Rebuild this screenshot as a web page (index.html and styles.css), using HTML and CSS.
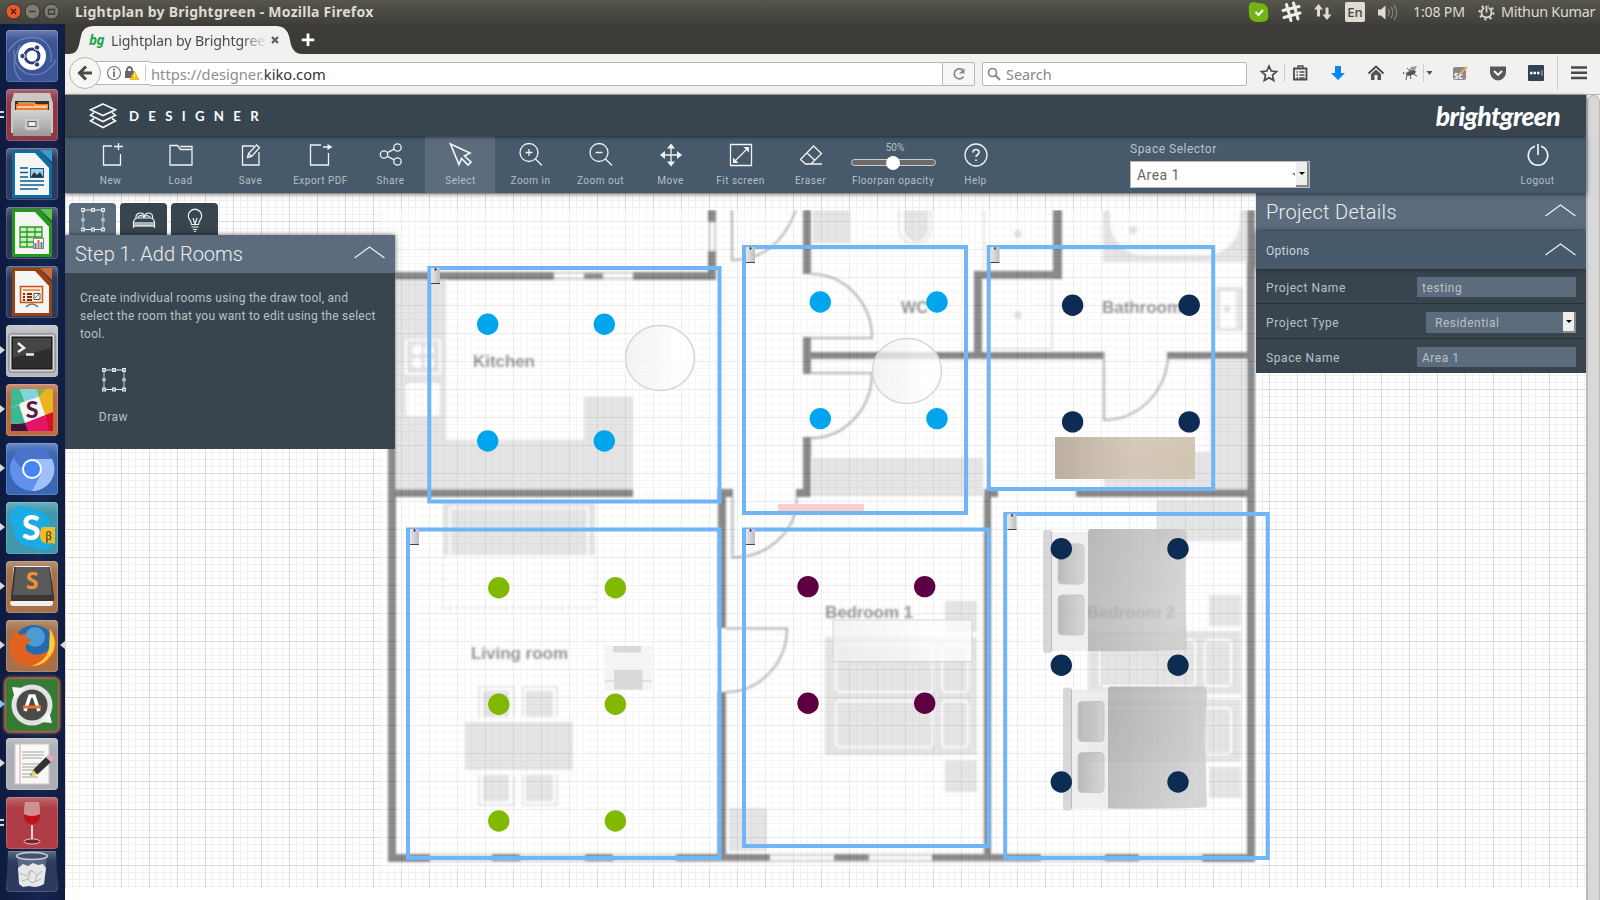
FILE: index.html
```html
<!DOCTYPE html>
<html lang="en">
<head>
<meta charset="utf-8">
<title>Lightplan by Brightgreen</title>
<link rel="stylesheet" href="styles.css">
</head>
<body>
<div class="desktop">
  <header class="menubar">
    <div class="win-buttons">
      <svg width="60" height="24" viewBox="0 0 60 24">
        <circle cx="13.500" cy="11.500" r="7.500" fill="#ea5b2b" stroke="#34332e"/><path d="M11 9l5 5m0-5l-5 5" stroke="#4b2113" stroke-width="1.500"/>
        <circle cx="32.500" cy="11.500" r="7.500" fill="#7d7b74" stroke="#34332e"/><path d="M29.500 11.500h6" stroke="#3c3b37" stroke-width="1.500"/>
        <circle cx="51.500" cy="11.500" r="7.500" fill="#7d7b74" stroke="#34332e"/><path d="M48.500 9.500h6v4.500h-6z" fill="none" stroke="#3c3b37" stroke-width="1.300"/>
      </svg>
    </div>
    <div class="win-title">Lightplan by Brightgreen - Mozilla Firefox</div>
    <div class="tray">
      <svg class="tray-icons" width="160" height="24" viewBox="1244 0 160 24">
        <path d="M1250 3q4-2 7 0q12-1 11 10q2 9-7 9q-13 1-12-10q-1-6 1-9z" fill="#73b414"/><path d="M1255.500 12l3 3 4.500-5" fill="none" stroke="#fff" stroke-width="2"/>
        <g stroke="#efeee9" stroke-width="3" stroke-linecap="round"><path d="M1286.500 4.500l4.500 16M1293.500 3l4.500 16M1283 10.500l16-4M1284 17.500l16-4.500"/></g>
        <path d="M1318.500 4l4.500 5.500h-3v7h-3v-7h-3zM1327 20l-4.500-5.500h3v-7h3v7h3z" fill="#dfdbd2"/>
        <rect x="1345" y="2" width="20" height="20" rx="2" fill="#dfdbd2"/>
        <path d="M1378 9.500h3l4.500-4v14l-4.500-4h-3z" fill="#dfdbd2"/><path d="M1388 9q2.500 3.500 0 7M1391 7q4 5.500 0 11M1394 5q5.500 7.500 0 15" fill="none" stroke="#85827a" stroke-width="1.300"/>
        <text x="1355" y="17" text-anchor="middle" class="lang">En</text>
      </svg>
      <span class="clock">1:08 PM</span>
      <svg class="gear" width="17" height="17" viewBox="-8.500 -8.500 17 17"><circle r="5" fill="none" stroke="#dfdbd2" stroke-width="1.800"/><circle r="7" fill="none" stroke="#dfdbd2" stroke-width="2" stroke-dasharray="2.200 3.298"/><path d="M0-8.500v8" stroke="#45443e" stroke-width="4"/><path d="M0-7v7" stroke="#dfdbd2" stroke-width="1.800"/></svg>
      <span class="user">Mithun Kumar</span>
    </div>
  </header>

  <div class="workspace">
    <nav class="launcher">
      <div class="tile t-dash"><svg viewBox="0 0 52 52"><g fill="none" stroke="#8da3d2" opacity=".5" stroke-width="1.500"><path d="M2 22Q12 5 32 8Q47 13 45 32M50 30Q40 48 22 44Q7 38 8 20M15 50Q2 38 14 15"/></g><circle cx="26" cy="26" r="14" fill="#fff"/><circle cx="26" cy="26" r="7" fill="none" stroke="#2b4077" stroke-width="3"/><g fill="#2b4077" stroke="#fff"><circle cx="16.500" cy="26" r="2.700"/><circle cx="31" cy="17.500" r="2.700"/><circle cx="31" cy="34.500" r="2.700"/></g></svg></div>
      <div class="tile t-files"><i class="bars"></i><svg viewBox="0 0 52 52"><path d="M8 4h36l3 10v30H5V14z" fill="#c9c8c6"/><path d="M9 12h34v12H9z" fill="#3d3027"/><path d="M10 15h32v8H10z" fill="#e77b32"/><path d="M12 14h16l2 3h12" fill="none" stroke="#f7b26c" stroke-width="1.500"/><path d="M11 18h30" stroke="#fbe0b8" stroke-width="1.500"/><path d="M7 21h38v26H7z" fill="url(#gSteel)"/><rect x="19" y="30" width="14" height="11" rx="2" fill="#cfcfcd"/><rect x="22" y="32.500" width="8" height="5" fill="#eee" stroke="#555"/></svg></div>
      <div class="tile t-dark"><svg viewBox="0 0 52 52"><path d="M6 2h27l13 14v34H6z" fill="#0f6c9f"/><path d="M34 2h12v12z" fill="#3b9ccb"/><path d="M9 5h20l14 15v27H9z" fill="#f5f5f5"/><path d="M14 20h8m-8 4.500h8m-8 4.500h8m-8 4h24m-24 4h24m-24 4h18" stroke="#0b5f8e" stroke-width="1.700"/><rect x="24.500" y="20.500" width="13" height="9" fill="#9ad1ef" stroke="#0b5f8e"/><path d="M25 29l3-5 3 3 3-3 3 5z" fill="#333"/></svg></div>
      <div class="tile t-dark"><svg viewBox="0 0 52 52"><path d="M6 2h27l13 14v34H6z" fill="#209a18"/><path d="M34 2h12v12z" fill="#5ac840"/><path d="M9 5h20l14 15v27H9z" fill="#f5f5f5"/><path d="M14 20h22v20H14zM14 25h22M14 30h22M14 35h22M21 20v20M29 20v20" fill="#c9f4c2" stroke="#289b20" stroke-width="1.300"/><rect x="27.500" y="31.500" width="10" height="10" fill="#fff" stroke="#888"/><path d="M29.500 41v-5" stroke="#3b86c8" stroke-width="2"/><path d="M32.500 41v-8" stroke="#e8642b" stroke-width="2"/><path d="M35.500 41v-6" stroke="#3b86c8" stroke-width="2"/></svg></div>
      <div class="tile t-dark"><svg viewBox="0 0 52 52"><path d="M6 2h27l13 14v34H6z" fill="#98430f"/><path d="M34 2h12v12z" fill="#cf6a33"/><path d="M9 5h20l14 15v27H9z" fill="#f5f5f5"/><rect x="14.500" y="20.500" width="22" height="16" fill="#fdeadb" stroke="#c05a1e" stroke-width="1.500"/><path d="M17 24h17" stroke="#e28142" stroke-width="1.500"/><path d="M17 28h2m2 0h5m-9 3h2m2 0h5m-9 3h2m2 0h5" stroke="#7a300a" stroke-width="2"/><path d="M28 27.500h6v6h-6z" fill="#fff" stroke="#555"/><path d="M29 32l2-2 2-2" stroke="#2b9c2b" fill="none"/><path d="M20 41q6-6 12 0" fill="none" stroke="#777" stroke-width="1.500"/></svg></div>
      <div class="tile t-silver"><i class="arrow"></i><svg viewBox="0 0 52 52"><rect x="3" y="9" width="46" height="38" rx="2" fill="#dadada" stroke="#777"/><rect x="6" y="12" width="40" height="32" fill="#2d2f2f" stroke="#111"/><path d="M7 13h38v10L7 33z" fill="#555" opacity=".6"/><path d="M12 18l6 5-6 4" fill="none" stroke="#eee" stroke-width="2.500"/><path d="M20 29.500h8" stroke="#eee" stroke-width="2.500"/></svg></div>
      <div class="tile t-orange"><i class="arrow"></i><svg viewBox="0 0 52 52"><rect x="5" y="5" width="42" height="42" rx="2" fill="#f5f2ee"/><path d="M5 5h9l5 13-14 6z" fill="#3eb991"/><path d="M14 5h16l3 8-14 5z" fill="#84d4dd"/><path d="M30 5h10l-3 7-4 1z" fill="#86b54a"/><path d="M40 5h7v23l-8 3-6-18z" fill="#ecb320"/><path d="M39 31l8-3v19h-5z" fill="#d80f2a"/><path d="M19 39l20-8 4 16H21z" fill="#e3156b"/><path d="M5 40l14-1 3 8H5z" fill="#3f1239"/><path d="M5 24l8-3 6 18-14 1z" fill="#3cb890"/><path d="M14 19l18-6 7 18-19 7z" fill="#f7f4f1"/><text x="26" y="34" text-anchor="middle" font-size="23" font-weight="900" fill="#512049" font-family="Lato">S</text></svg></div>
      <div class="tile t-chrome"><i class="arrow"></i><svg viewBox="0 0 52 52"><circle cx="26" cy="26" r="22" fill="#5f91ed"/><path d="M26 16h20a22 22 0 0 1-20 32l9-17z" fill="#9fc0f8"/><path d="M7 15a22 22 0 0 1 39 1H26q-9 1-10 10z" fill="#4a74cc"/><circle cx="26" cy="26" r="10" fill="#fff"/><circle cx="26" cy="26" r="8" fill="#4486f3"/></svg></div>
      <div class="tile t-skype"><i class="arrow"></i><svg viewBox="0 0 52 52"><circle cx="26" cy="26" r="19" fill="#19abe6"/><circle cx="16" cy="16" r="12" fill="#19abe6"/><circle cx="36" cy="36" r="12" fill="#19abe6"/><text x="25" y="38" text-anchor="middle" font-size="34" font-weight="900" fill="#fff" font-family="Lato">S</text><path d="M36 25h13v17l-3-1q-12 2-12-7 0-6 2-9z" fill="#f0bd27"/><text x="42.500" y="38" text-anchor="middle" font-size="12" font-family="Liberation Serif" fill="#222">β</text></svg></div>
      <div class="tile t-brown"><i class="arrow"></i><svg viewBox="0 0 52 52"><path d="M6 38l1-30q0-3 3-3h32q3 0 3 3l2 34q0 3-3 3H8q-4 0-4-3z" fill="#f0f0ee"/><path d="M8 6h36l4 30v4H5v-4z" fill="#373737"/><path d="M10 6h33l3 28H7z" fill="#5a5a5a"/><text x="26" y="28" text-anchor="middle" font-size="23" font-weight="700" fill="#ef9335" font-family="Open Sans">S</text></svg></div>
      <div class="tile t-brown"><i class="arrow"></i><i class="arrow active"></i><svg viewBox="0 0 52 52"><circle cx="28" cy="25" r="20" fill="#256aae"/><circle cx="29" cy="17" r="10" fill="#4a9bd6"/><path d="M9 10l5 5 8-2-3 5 7 2-6 5q-2 5 4 8 10 5 21-5 5-9 1-16 6 8 3 19-5 16-22 16Q5 46 4 28q0-11 5-18z" fill="#e2631e"/><path d="M44 9q9 14 1 26-8 12-20 11 16-5 18-18z" fill="#f7cd3c"/></svg></div>
      <div class="tile t-update"><i class="arrow blue"></i><svg viewBox="0 0 52 52"><circle cx="26" cy="26" r="18" fill="#494b49" stroke="#e3e3e1" stroke-width="5"/><path d="M6 8l12 1-9 11zM46 44l-12-1 9-11z" fill="#f4f4f4"/><path d="M19 32l5-15h4l5 15" fill="none" stroke="#fff" stroke-width="3.500"/><path d="M17 28h18" stroke="#f0702a" stroke-width="3"/></svg></div>
      <div class="tile t-silver2"><i class="arrow"></i><svg viewBox="0 0 52 52"><rect x="9" y="6" width="34" height="40" fill="#f8f8f6" stroke="#ccc"/><path d="M14 6v40" stroke="#e7a0a0"/><path d="M16 14h22m-22 3h22m-22 3h20m-20 6h22m-22 3h17m-17 3h18m-18 4h14m-14 3h16" stroke="#999" stroke-width=".9"/><path d="M24 38l4-7 12-12 5 5-13 12z" fill="#333"/><path d="M24 40l3-8 4 4z" fill="#e6d36a"/><path d="M40 19l3-3 5 4-3 4z" fill="#eea6c6"/></svg></div>
      <div class="tile t-wine"><i class="bars"></i><svg viewBox="0 0 52 52"><path d="M19 5h14q4 22-7 23-11-1-7-23z" fill="#d8a4a6" opacity=".8"/><path d="M17.500 17q8 4 17 0 0 10-8.500 11-8.500-1-8.500-11z" fill="#c0131c"/><path d="M26 28v15" stroke="#ddd" stroke-width="2"/><ellipse cx="26" cy="44.500" rx="8" ry="2.500" fill="#7d2025" stroke="#e4c8c8"/></svg></div>
      <div class="tile t-trash"><svg viewBox="0 0 52 41"><path d="M11 5l3 28q12 5 24 0l3-28" fill="#8793a7" opacity=".5"/><ellipse cx="26" cy="5" rx="15.500" ry="3.500" fill="#47536d" stroke="#c9cfd6" stroke-width="1.500"/><path d="M12 17l5-4 5 2 5-3 5 2 5-1 3 4-2 16-4 2-5 1-6-1-6 1-4-3z" fill="#e6e7e7"/><path d="M14 22l6 3 5-6 6 5 5-4M16 30l6-2 4 4 9-4M25 19l-3 9M31 24l-2 7" stroke="#b0b3b6" fill="none"/></svg></div>
    </nav>

    <main class="browser">
      <div class="tabstrip">
        <svg class="tab-shape" width="250" height="30" viewBox="0 0 250 30"><path d="M0 30q8 0 10-9l2-9q2-10 12-10H208q9 0 12 10l2 9q3 9 11 9z" fill="#f2f1f0"/><path d="M239 9.500v12.500m-6.300-6.200h12.600" stroke="#fff" stroke-width="2.800"/></svg>
        <div class="tab-content"><b>bg</b><span>Lightplan by Brightgree</span><svg width="8" height="8" viewBox="0 0 8 8"><path d="M1 1l6 6M7 1L1 7" stroke="#5c5a57" stroke-width="2.200"/></svg></div>
      </div>
      <div class="navbar">
        <svg class="url-icons" width="85" height="40" viewBox="65 55 85 40"><path d="M90 62.500h60M90 85.500h60" stroke="#b9b5af"/><path d="M90 63h60v22H90z" fill="#fff"/><circle cx="85" cy="74" r="15.500" fill="#f7f6f5" stroke="#b9b5af"/><path d="M92 74H80m6-6.500l-6.500 6.500 6.500 6.500" fill="none" stroke="#4c4a48" stroke-width="3"/><circle cx="114" cy="74" r="6.500" fill="none" stroke="#777" stroke-width="1.200"/><path d="M114 72.500v5.500m0-8.500v2" stroke="#666" stroke-width="1.700"/><path d="M125 72h9v7h-9z" fill="#666"/><path d="M127 73v-3q2.500-4 5 0v3" fill="none" stroke="#666" stroke-width="1.800"/><path d="M134.500 71.500l5 9.500h-10z" fill="#f9b915"/><path d="M134.500 75v3m0 1v1" stroke="#fff" stroke-width="1.200"/><path d="M145.500 66v16" stroke="#ccc"/></svg>
        <div class="url"><span>https://designer.</span>kiko.com</div>
        <div class="reload"><svg width="14" height="14" viewBox="0 0 14 14"><path d="M11.500 9.500a5 5 0 1 1-1-6.500" fill="none" stroke="#888" stroke-width="1.700"/><path d="M12.500 1v5.500H7z" fill="#888"/></svg></div>
        <div class="search"><svg width="14" height="14" viewBox="0 0 14 14"><circle cx="5.500" cy="5.500" r="4" fill="none" stroke="#888" stroke-width="1.700"/><path d="M8.500 8.500l4.500 4.500" stroke="#888" stroke-width="2"/></svg>Search</div>
        <svg class="nav-icons" width="350" height="40" viewBox="1250 55 350 40">
          <path d="M1269 67l2.200 5 5.300.6-4 3.500 1.200 5.400-4.700-2.800-4.700 2.800 1.200-5.400-4-3.500 5.300-.6z" fill="none" stroke="#4c4a48" stroke-width="1.700"/>
          <path d="M1284.500 65v18M1423.500 65v18M1557.500 57v34" stroke="#cfccc8"/>
          <path d="M1294 69.500h12.500v11H1294z" fill="none" stroke="#4c4a48" stroke-width="1.800"/><path d="M1298 69v-2h5v2M1296.500 73h1.500m1.500 0h5m-8 3h1.500m1.500 0h5m-8 3h1.500m1.500 0h5" stroke="#4c4a48" fill="none" stroke-width="1.300"/>
          <path d="M1335 67h6v7h4l-7 7-7-7h4z" fill="#0a84f0"/>
          <path d="M1368.500 74.500l7.500-7 7.500 7" fill="none" stroke="#4c4a48" stroke-width="1.800"/><path d="M1371 75l5-4.500 5 4.500v6h-3.500v-5h-3v5h-3.500z" fill="#555"/>
          <path d="M1404 75l5-3 2-4 6-1-2 4-4 3z" fill="#999"/><ellipse cx="1411" cy="74" rx="5" ry="2.200" transform="rotate(-20 1411 74)" fill="#555"/><path d="M1404 73l-1 2m4 1l-1 5m4-5l1 4m2-5l4 2m-7-5l-3-3" stroke="#555"/>
          <path d="M1426.500 72h6l-3 4z" fill="#555"/>
          <rect x="1453" y="68" width="13" height="13" rx="2" fill="#8b8986"/><path d="M1460 75l7-7" stroke="#dfb25b" stroke-width="2"/><text x="1454" y="80" font-size="8" font-weight="700" fill="#fff">Sc</text>
          <path d="M1490 67.500h16v6q-1 7-8 8-7-1-8-8z" fill="#5a5856"/><path d="M1494 72l4 4 4-4" fill="none" stroke="#fff" stroke-width="1.800"/>
          <rect x="1528" y="66" width="16" height="16" rx="1" fill="#31434f"/><path d="M1530 74h2.500m1 0h2.500m1 0h2.500" stroke="#fff" stroke-width="2.300"/><path d="M1542 71v6" stroke="#bbb"/>
          <path d="M1571 68.500h16M1571 73.800h16M1571 79h16" stroke="#4c4a48" stroke-width="2.600"/>
        </svg>
      </div>

      <div class="viewport">
        <div class="app">
          <header class="brandbar">
            <svg width="28" height="26" viewBox="0 0 28 26" fill="none" stroke="#f4f6f7" stroke-width="1.600"><path d="M14 1l12.500 5.800L14 12.500 1.500 6.800zM5 9.500l-3.500 2.800L14 18.500l12.500-6.200L23 9.500M5 15.500l-3.500 2.500L14 24.500l12.500-6.500L23 15.500"/></svg>
            <span class="designer">DESIGNER</span>
            <span class="brand">brightgreen</span>
          </header>
          <div class="toolbar">
            <div class="tool"><svg viewBox="0 0 26 26"><path d="M14 4H5.500v19h17V12M20.500 1v7m-4.500-3.500h9"/></svg>New</div>
            <div class="tool"><svg viewBox="0 0 26 26"><path d="M2 23V3.500h7.500l3 4H24V23zM12 4.500h12v3"/></svg>Load</div>
            <div class="tool"><svg viewBox="0 0 26 26"><path d="M16 4H4.500v19h16.500V10M9.500 15.500l1-4L18.500 3l3 2.500-8 9zM10.500 11.500l3 3"/></svg>Save</div>
            <div class="tool"><svg viewBox="0 0 26 26"><path d="M13 3H2.500v20h18V11M15 5h7"/><path d="M19.500 2l5 3-5 3z" class="solid"/></svg>Export PDF</div>
            <div class="tool"><svg viewBox="0 0 26 26"><circle cx="6" cy="12.500" r="3.700"/><circle cx="19.500" cy="5.500" r="3.700"/><circle cx="19.500" cy="19.500" r="3.700"/><path d="M9.300 10.700l7-3.500M9.300 14.300l7 3.500"/></svg>Share</div>
            <div class="tool on"><svg viewBox="0 0 26 26"><path stroke-width="1.700" d="M2.500 2l19.500 9-5.500 3 6.500 6-3 3-6.500-6.500-2.500 6z"/></svg>Select</div>
            <div class="tool"><svg viewBox="0 0 26 26"><circle cx="11" cy="10.500" r="9"/><path d="M17.500 17l6.500 6.500M7.500 10.500h7M11 7v7"/></svg>Zoom in</div>
            <div class="tool"><svg viewBox="0 0 26 26"><circle cx="11" cy="10.500" r="9"/><path d="M17.500 17l6.500 6.500M7.500 10.500h7"/></svg>Zoom out</div>
            <div class="tool"><svg viewBox="0 0 26 26"><path d="M13 4v18M4 13h18"/><path class="solid" d="M13 1.500l4 5H9zM13 24.500l4-5H9zM2 13l5-4v8zM24 13l-5-4v8z"/></svg>Move</div>
            <div class="tool"><svg viewBox="0 0 26 26"><path d="M2.500 2.500h21v21h-21zM7 19L19 7"/><path class="solid" d="M21 5v5.500L15.500 5zM5 21v-5.500l5.500 5.500z"/></svg>Fit screen</div>
            <div class="tool"><svg viewBox="0 0 26 26"><path d="M2.500 17.500L15.500 4l8 7.500L13 22H7.500zM9 11l8 7.500M12 22h12"/></svg>Eraser</div>
            <div class="slider"><span>50%</span><div class="track"><i></i></div>Floorpan opacity</div>
            <div class="tool"><svg viewBox="0 0 26 26"><circle cx="13" cy="13" r="11"/><path d="M10 10.500q0-3 3-3t3 2.700q0 1.500-1.500 2.500t-1.500 2.300M13 17.500v1.500" stroke-width="1.700"/></svg>Help</div>
            <div class="space"><label>Space Selector</label><div class="select">Area 1<i class="ghost"></i><i class="drop"></i></div></div>
            <div class="tool logout"><svg viewBox="0 0 26 26"><path stroke-width="1.700" d="M10 4.300a9.700 9.700 0 1 0 6 0M13 2v11"/></svg>Logout</div>
          </div>

          <div class="canvas">
            <svg class="plan" width="1521" height="707" viewBox="65 193 1521 707">
              <defs>
                <linearGradient id="gSteel" x2="0" y2="1"><stop stop-color="#d4d4d3"/><stop offset="1" stop-color="#9a9a98"/></linearGradient>
                <linearGradient id="gSwitch"><stop stop-color="#e6e7e9"/><stop offset="1" stop-color="#bcbec2"/></linearGradient>
                <pattern id="grid" x="65" y="193" width="28" height="28" patternUnits="userSpaceOnUse"><path d="M7.500 0v28M14.500 0v28M21.500 0v28M0 7.500h28M0 14.500h28M0 21.500h28" stroke="#f0f0f0"/><path d="M.5 0v28M0 .5h28" stroke="#dadada"/></pattern>
                <filter id="soft" x="-5%" y="-5%" width="110%" height="110%"><feGaussianBlur stdDeviation=".8"/></filter>
                <linearGradient id="gWhite"><stop stop-color="#f0f0f0"/><stop offset=".48" stop-color="#f8f8f8"/><stop offset=".7" stop-color="#fff"/><stop offset="1" stop-color="#fff"/></linearGradient>
                <linearGradient id="gWood"><stop stop-color="#b7a99c"/><stop offset=".55" stop-color="#d4c5b4"/><stop offset="1" stop-color="#d0c2ae"/></linearGradient>
                <linearGradient id="gBlanket" x2="1" y2=".3"><stop stop-color="#a8a8a8"/><stop offset="1" stop-color="#cbcbcb"/></linearGradient>
                <linearGradient id="gPillow"><stop stop-color="#a9a9a9"/><stop offset="1" stop-color="#cecece"/></linearGradient>
                <g id="switch"><rect width="9" height="15.500" fill="url(#gSwitch)"/><path d="M0 15.500h9" stroke="#444"/><path d="M4.500 0v3M3.300 1.300h2.500" stroke="#444"/></g>
                <g id="bed"><path d="M1051 532h38v119h-38z" fill="#ececec"/><rect x="1043" y="530" width="9" height="123" rx="3" fill="#cfcfcf"/><path d="M1051.500 532v119" stroke="#aaa"/><rect x="1058" y="544" width="26" height="40" rx="4" fill="url(#gPillow)" stroke="#bcbcbc"/><rect x="1058" y="595" width="26" height="40" rx="4" fill="url(#gPillow)" stroke="#bcbcbc"/><path d="M1090 529h93q5 3 4 7-3 50 0 112l-2 2q-50 2-97 1V531z" fill="url(#gBlanket)"/></g>
              </defs>
              <rect x="65" y="193" width="1521" height="695" fill="#fff"/>
              <rect x="65" y="193" width="1521" height="695" fill="url(#grid)"/>
              <g opacity=".52">
                <rect x="380" y="210" width="882" height="660" fill="#fff"/>
                <svg x="380" y="210" width="882" height="660" viewBox="380 210 882 660">
                <g filter="url(#soft)">
                  <g fill="#cecece">
                    <path d="M395 279h51v161h138v-43h49v92H395zM443 503h152v52H443zM465 722h108v48H465zM483 691h26v26h-26zM526 691h27v26h-27zM483 775h26v26h-26zM526 775h27v26h-27zM729 808h38v43h-38zM812 458h171v38H812zM813 210h37v33h-37zM1103 210h144v52h-144zM1210 360h37v130H1104v-38h106zM1216 287h27v44h-27zM1157 500h85v41h-85zM1088 631h153v63h-153zM1088 699h153v63h-153zM1209 595h32v31h-32zM1209 767h32v31h-32zM825 637h152v118H825zM945 601h32v31h-32zM945 760h32v32h-32z"/>
                    <path d="M904 210h24v20q-4 12-12 12t-12-12z"/><circle cx="1018" cy="234" r="4"/><circle cx="1018" cy="315" r="4"/>
                  </g>
                  <g fill="#fff"><rect x="1110" y="168" width="130" height="87" rx="34"/><circle cx="417" cy="350" r="5"/><circle cx="429" cy="350" r="5"/><circle cx="417" cy="363" r="5"/><circle cx="429" cy="363" r="5"/><rect x="406" y="383" width="34" height="33" rx="4"/><path d="M1220 291h16v37h-16z"/></g>
                  <g fill="none" stroke="#fff" stroke-width="2"><rect x="406" y="340" width="34" height="34" rx="2"/><path d="M450 555v-47h138v47"/><rect x="836" y="645" width="97" height="47" rx="4"/><rect x="942" y="645" width="26" height="47" rx="4"/><rect x="836" y="701" width="97" height="46" rx="4"/><rect x="942" y="701" width="26" height="46" rx="4"/><rect x="1100" y="640" width="95" height="46" rx="4"/><rect x="1205" y="640" width="26" height="46" rx="4"/><rect x="1100" y="708" width="95" height="46" rx="4"/><rect x="1205" y="708" width="26" height="46" rx="4"/></g>
                  <circle cx="1133" cy="230" r="4" fill="#ccc"/><circle cx="1227" cy="309" r="3.500" fill="#ccc"/>
                  <g fill="none" stroke="#d4d4d4" stroke-width="2"><path d="M479 717v-30h35v30M523 717v-30h34v30M479 775v30h35v-30M523 775v30h34v-30M984 210v60M983 279h69v70h-69M899 210v20q3 14 16 14t16-14v-20"/><path d="M443 557v51h152v-51" stroke-dasharray="3 4"/></g>
                  <path fill="#202020" d="M388 272h8v582h34v8h-42zM388 272h166v8H388zM584 272h19v8h-19zM633 272h75v-21h8v29h-83zM708 210h8v12h-8zM395 489h238v8H395zM718 489h15v8h-7v131h-8zM718 692h8v162h44v8h-94v-8h42zM492 854h28v8h-28zM585 854h28v8h-28zM803 210h8v64h-8zM803 337h8v15h163v-81h79v-61h9v69h-80v73h122v7H811v15h-8zM803 437h8v60h-15v-8h7zM1167 352h80v-142h8v652h-53v-8h45v-357h-171v-8h171v-130h-80zM984 489h14v8h-7v357h50v8h-109v-8h52zM834 854h35v8h-35zM1105 854h34v8h-34z"/>
                  <path d="M554 273h79M554 279h79M709.500 222v29M715 222v29M430 855h62m28 0h65m28 0h63m94 0h64m35 0h63m109 0h64m34 0h63M430 861h772" fill="none" stroke="#8a8a8a" stroke-width="1.500"/>
                  <g fill="none" stroke="#6f6f6f" stroke-width="2"><path d="M732 210v50q45 0 64-50M811 274a61 64 0 0 1 61 64h-61M811 373h61a61 65 0 0 1-61 65M1104 352v68a64 68 0 0 0 64-61M726 628.500h61a61 64 0 0 1-61 63.500M732.500 497v60.500a64 60 0 0 0 64.500-60"/></g>
                  <g class="room-names"><text x="473" y="366.500" textLength="62">Kitchen</text><text x="901" y="313" textLength="27" lengthAdjust="spacingAndGlyphs">WC</text><text x="1102" y="313" textLength="80">Bathroom</text><text x="471" y="659" textLength="97">Living room</text><text x="825" y="618" textLength="88">Bedroom 1</text><text x="1087" y="618" textLength="88">Bedroom 2</text></g>
                </g></svg>
              </g>
              <g stroke="#d5d5d5" stroke-width="1.500" fill="url(#gWhite)"><ellipse cx="660" cy="358" rx="34.500" ry="32.500" fill-opacity=".75"/><ellipse cx="907" cy="371" rx="34.500" ry="32.500" fill-opacity=".75"/><rect x="833" y="620" width="139" height="41.500" fill-opacity=".75" stroke-width="1"/></g>
              <g><path d="M605 646h47v44h-47z" fill="#f3f3f3" opacity=".8"/><path d="M613 646h28v6.500h-28zM614 670h28.500v19.500H614z" fill="#d9d9d9"/><path d="M605 681h9m28 0h10" stroke="#ddd" stroke-width="1.500"/></g>
              <use href="#bed" opacity=".8"/><use href="#bed" x="20" y="157.500" opacity=".8"/>
              <rect x="1055" y="437" width="140" height="42" fill="url(#gWood)" opacity=".93"/>
              <rect x="778" y="504" width="86" height="8" fill="#ffcdcd"/>
              <g fill="none" stroke="#70b5f8" stroke-width="4"><path d="M429.300 268h290.200v233.500H429.300zM744 247h222v266H744zM988.700 247h224.500v242H988.700zM408 529.500h311.500V858H408zM744 529.500h244.500V846H744zM1005.200 514h262.500v344h-262.500z"/></g>
              <use href="#switch" x="431" y="268"/><use href="#switch" x="746" y="247"/><use href="#switch" x="990.500" y="247"/><use href="#switch" x="410" y="529"/><use href="#switch" x="746" y="529"/><use href="#switch" x="1007.500" y="514"/>
              <g fill="#00a5ee"><circle cx="487.700" cy="324.300" r="10.700"/><circle cx="604.300" cy="324.300" r="10.700"/><circle cx="487.700" cy="441" r="10.700"/><circle cx="604.300" cy="441" r="10.700"/><circle cx="820.300" cy="302" r="10.700"/><circle cx="937" cy="302" r="10.700"/><circle cx="820.300" cy="418.600" r="10.700"/><circle cx="937" cy="418.600" r="10.700"/></g>
              <g fill="#0c2c54"><circle cx="1072.600" cy="305.300" r="10.700"/><circle cx="1189.200" cy="305.300" r="10.700"/><circle cx="1072.600" cy="421.900" r="10.700"/><circle cx="1189.200" cy="421.900" r="10.700"/><circle cx="1061.300" cy="548.700" r="10.700"/><circle cx="1178" cy="548.700" r="10.700"/><circle cx="1061.300" cy="665.300" r="10.700"/><circle cx="1178" cy="665.300" r="10.700"/><circle cx="1061.300" cy="782" r="10.700"/><circle cx="1178" cy="782" r="10.700"/></g>
              <g fill="#80b900"><circle cx="498.800" cy="587.700" r="10.700"/><circle cx="615.400" cy="587.700" r="10.700"/><circle cx="498.800" cy="704.300" r="10.700"/><circle cx="615.400" cy="704.300" r="10.700"/><circle cx="498.800" cy="821" r="10.700"/><circle cx="615.400" cy="821" r="10.700"/></g>
              <g fill="#5d0043"><circle cx="808" cy="586.600" r="10.700"/><circle cx="924.700" cy="586.600" r="10.700"/><circle cx="808" cy="703.200" r="10.700"/><circle cx="924.700" cy="703.200" r="10.700"/></g>
            </svg>

            <aside class="steps">
              <div class="step-tabs">
                <div class="stab on"><svg viewBox="0 0 24 24"><use href="#marquee"/></svg></div>
                <div class="stab"><svg viewBox="0 0 24 24"><path d="M1.500 20v-6q1-4 4-4h13q3 0 4 4v6M4 10V8q1-3 4.500-3 3 0 4 3 1-3 4-3 3.500 0 4 3v2M6 9q3-3 6 0 3-3 6 0"/><path d="M2 14h20v4H2z" fill="#aab3bb" stroke="none"/><path d="M1.500 18h21"/></svg></div>
                <div class="stab"><svg viewBox="0 0 24 24"><path d="M8.500 16.500q0-3-2-5Q4 7 7 3.500q5-4.500 10 0 3 3.500.5 8-2 2-2 5zM8.500 19h7M10 21.500h4M10 10l2 6 2-6M11 23.500h2"/></svg></div>
              </div>
              <div class="step-head">Step 1. Add Rooms<svg class="chev" width="31" height="13" viewBox="0 0 31 13"><path d="M.5 12L15.500 1l15 11"/></svg></div>
              <div class="step-body"><p>Create individual rooms using the draw tool, and<br>select the room that you want to edit using the select<br>tool.</p>
                <div class="draw"><svg viewBox="0 0 24 24"><g id="marquee"><path d="M2 2h20M2 21.500h20"/><path d="M2 2v20M22 2v20" stroke="#aeb5bb"/><g fill="#475a6a"><path d="M.7.700h2.600v2.600H.7zM10.700.700h2.600v2.600h-2.600zM20.700.700h2.600v2.600h-2.600zM.7 20.200h2.600v2.600H.7zM10.700 20.200h2.600v2.600h-2.600zM20.700 20.200h2.600v2.600h-2.600z"/></g><g fill="#b7bec4" stroke="none"><circle cx="2" cy="11.700" r="2"/><circle cx="22" cy="11.700" r="2"/></g></g></svg>Draw</div>
              </div>
            </aside>

            <aside class="project">
              <div class="p-head">Project Details<svg class="chev" width="31" height="13" viewBox="0 0 31 13"><path d="M.5 12L15.500 1l15 11"/></svg></div>
              <div class="p-sub">Options<svg class="chev" width="31" height="13" viewBox="0 0 31 13"><path d="M.5 12L15.500 1l15 11"/></svg></div>
              <div class="row"><span>Project Name</span><div class="field">testing</div></div>
              <div class="row"><span>Project Type</span><div class="field pick">Residential<i class="drop"></i></div></div>
              <div class="row"><span>Space Name</span><div class="field">Area 1</div></div>
            </aside>
          </div>
        </div>
        <div class="scrollbar"><i></i></div>
      </div>
    </main>
  </div>
</div>
</body>
</html>
```
FILE: styles.css
```css
* { box-sizing: border-box; }
body { margin: 0; overflow: hidden; }
svg { display: block; flex: none; }
i { font-style: normal; }
.desktop { width: 1600px; height: 900px; display: flex; flex-direction: column; font-family: Roboto, sans-serif; }

/* system menu bar */
.menubar { height: 24px; flex: none; display: flex; align-items: center; background: linear-gradient(#57564c, #403f3a); color: #dfdbd2; font-family: "Noto Sans", sans-serif; font-size: 14.5px; line-height: 24px; }
.win-buttons { width: 75px; }
.win-title { font-weight: 700; font-size: 14px; letter-spacing: .25px; white-space: nowrap; }
.tray { margin-left: auto; display: flex; align-items: center; white-space: nowrap; width: 356px; }
.clock { width: 72px; padding-left: 9px; letter-spacing: -.2px; font-size: 14.2px; }
.gear { margin-left: 2px; margin-right: 6px; }
.tray span { white-space: nowrap; }
.user { font-size: 14.4px; letter-spacing: -.3px; }
.lang { font-size: 13px; fill: #45443f; font-weight: 500; }

.workspace { display: flex; flex: 1; min-height: 0; }

/* launcher */
.launcher { width: 65px; flex: none; padding: 6px 7px 0 6px; display: flex; flex-direction: column; gap: 7px; background: linear-gradient(90deg, #0e1b40, #152550 60%, #101d42); }
.tile { width: 52px; height: 52px; flex: none; border-radius: 4px; position: relative; box-shadow: inset 0 0 0 1px rgba(255,255,255,.16), inset 0 12px 10px -8px rgba(255,255,255,.3); }
.tile svg { width: 52px; height: 100%; }
.t-dash { background: #3c5596; }
.t-files { background: #8d3846; }
.t-dark { background: #2b3a5c; }
.t-silver { background: #b9babc; }
.t-orange { background: #b96d45; }
.t-chrome { background: #3b66b4; }
.t-skype { background: #3f98ab; }
.t-brown { background: #a4714b; }
.t-update { background: #367a35; box-shadow: 0 0 3px 2px #c4744b; }
.t-silver2 { background: #aeaeb4; }
.t-wine { background: #ae3d45; }
.t-trash { height: 41px; margin-top: -5px; background: #2b3a5f; clip-path: polygon(4% 0, 96% 0, 100% 100%, 0 100%); }
.arrow, .bars { position: absolute; left: -6px; top: 21px; border: solid transparent; border-width: 4.5px 0 4.5px 5px; border-left-color: #d8d8d8; }
.arrow.active { left: auto; right: -7px; border-width: 4.5px 5px 4.5px 0; border-right-color: #d8d8d8; }
.arrow.blue { border-left-color: #74c8f5; }
.bars { top: 22px; border: 0; width: 4px; height: 7px; border-top: 2.5px solid #d8d8d8; border-bottom: 2.5px solid #d8d8d8; }

/* browser chrome */
.browser { flex: 1; min-width: 0; display: flex; flex-direction: column; }
.tabstrip { height: 30px; flex: none; background: #3c3b37; display: flex; padding-left: 4px; }
.tab-content { margin-left: -230px; display: flex; align-items: center; width: 200px; font: 14.5px "Noto Sans", sans-serif; color: #4c4c4c; height: 32px; }
.tab-content b { font-style: italic; color: #1fa352; width: 22px; font-size: 13.5px; letter-spacing: -.5px; }
.tab-content span { width: 156px; flex: none; white-space: nowrap; font-size: 14.2px; letter-spacing: -.15px; mask-image: linear-gradient(90deg, #000 84%, transparent); }
.tab-content svg { margin-left: 4px; }
.navbar { height: 41px; flex: none; display: flex; align-items: center; background: #f2f1f0; border-bottom: 1px solid #b6b3ae; font-family: "Noto Sans", sans-serif; font-size: 14px; color: #888; }
.url { width: 792px; height: 24px; border: 1px solid #b9b5af; border-width: 1px 0; background: #fff; color: #333; line-height: 22px; font-size: 14.7px; padding-left: 1px; }
.url span { color: #8e8e8e; }
.reload { width: 33px; height: 24px; border: 1px solid #b9b5af; background: #f7f6f5; border-radius: 0 2px 2px 0; display: flex; align-items: center; justify-content: center; }
.search { margin-left: 7px; width: 265px; height: 24px; border: 1px solid #b9b5af; border-radius: 2px; background: #fff; display: flex; align-items: center; gap: 5px; padding-left: 4px; font-size: 14.4px; }
.nav-icons { margin-left: auto; margin-right: 0; }

.viewport { flex: 1; min-height: 0; display: flex; }
.app { width: 1521px; display: flex; flex-direction: column; }
.scrollbar { width: 14px; background: #f2f1f0; border-left: 1px solid #bbb; }
.scrollbar i { display: block; height: 100%; border-radius: 7px 7px 0 0; background: #d8d8d8; border: 1px solid #b8b8b8; border-bottom: 0; }

/* application bars */
.brandbar { height: 41px; flex: none; background: #38454e; display: flex; align-items: center; padding: 0 26px 0 24px; z-index: 3; box-shadow: 0 1px 4px rgba(0,0,0,.55); color: #fff; }
.designer { font: 700 13.2px Lato, sans-serif; letter-spacing: 9.3px; margin-left: 12px; }
.brand { margin-left: auto; font: italic 900 26.5px Lato, sans-serif; letter-spacing: -.65px; }
.toolbar { height: 57px; flex: none; background: #475a6b; display: flex; padding-left: 10px; z-index: 2; box-shadow: 0 1px 5px rgba(0,0,0,.6); color: #b6bfc6; font-size: 10px; letter-spacing: .5px; }
.tool { width: 70px; display: flex; flex-direction: column; align-items: center; padding-top: 6px; padding-left: 1px; line-height: 14px; gap: 6px; white-space: nowrap; }
.tool svg { width: 26px; height: 26px; fill: none; stroke: #f1f3f4; stroke-width: 1.3; }
.tool svg .solid { fill: #f1f3f4; stroke: none; }
.tool.on { background: #5d6c7d; }
.slider { width: 95px; text-align: center; line-height: 14px; padding-top: 5px; padding-left: 1px; white-space: nowrap; }
.slider span { display: block; letter-spacing: 0; line-height: 14px; padding-left: 4px; }
.track { width: 85px; height: 7px; margin: 4px auto 8px; border: 1px solid #ccc; border-radius: 4px; background: #6c6a68; display: flex; justify-content: center; align-items: center; }
.track i { width: 14px; height: 14px; border-radius: 50%; background: #fff; flex: none; }
.space { margin-left: 120px; width: 180px; font-size: 12px; letter-spacing: .5px; color: #bac3ca; }
.space label { display: block; height: 25px; padding-top: 6px; line-height: 14px; }
.select { height: 27px; border: 1px solid #bbb; background: #fff; color: #666; font-size: 14px; line-height: 27px; padding-left: 6px; letter-spacing: .45px; display: flex; }
.ghost { margin-left: auto; align-self: center; border: solid transparent; border-width: 3.5px 0 0 3px; border-top-color: #777; margin-right: 1px; }
.drop { width: 13px; background: #efeeec; border: solid #888; border-width: 0 2px 2px 0; display: flex; align-items: center; justify-content: center; }
.drop::after { content: ""; border: solid transparent; border-width: 3.5px 3.5px 0; border-top-color: #000; }
.logout { margin-left: auto; margin-right: 14px; }

/* drawing canvas with floating panels */
.canvas { position: relative; flex: 1; min-height: 0; background: #fff; overflow: hidden; }
.room-names { font: 700 17px "Liberation Sans", Arial, sans-serif; fill: #3a3a3a; }
.steps { position: absolute; left: 0; top: 10px; width: 330px; }
.step-tabs { display: flex; gap: 4px; padding-left: 4px; }
.stab { width: 47px; height: 32px; border-radius: 4px 4px 0 0; background: #38454e; display: flex; justify-content: center; padding-top: 5px; }
.stab.on { background: #5d6c7d; }
.stab svg, .draw svg { width: 24px; height: 24px; fill: none; stroke: #eef0f2; stroke-width: 1.2; }
.step-head, .p-head { height: 38px; background: #5d6c7d; color: #eceff1; font-weight: 300; font-size: 20px; letter-spacing: .3px; line-height: 38px; display: flex; align-items: center; justify-content: space-between; padding: 0 10px; }
.step-head { box-shadow: 0 0 5px rgba(0,0,0,.6); position: relative; letter-spacing: 0; }
.chev { fill: none; stroke: #eef0f2; stroke-width: 1.2; margin-top: -4px; }
.step-body { height: 176px; background: #38454e; color: #b9c1c7; padding: 16px 15px; font-size: 12px; position: relative; }
.step-body p { margin: 0; line-height: 18px; letter-spacing: .26px; white-space: nowrap; }
.draw { width: 67px; margin-top: 25px; display: flex; flex-direction: column; align-items: center; gap: 16px; line-height: 18px; letter-spacing: .5px; }
.project { position: absolute; right: 0; top: 0; width: 330px; background: #38454e; color: #b9c1c7; font-size: 12px; letter-spacing: .6px; }
.p-sub { height: 38px; background: #475a6b; display: flex; justify-content: space-between; align-items: center; padding: 2px 10px 0; color: #cdd3d8; box-shadow: 0 0 5px rgba(0,0,0,.6); letter-spacing: .3px; }
.row { height: 35px; display: flex; align-items: center; justify-content: space-between; padding: 2px 10px 0; border-bottom: 1px solid #2c3134; }
.row span { padding-top: 2px; }
.row:last-child { border-bottom: 0; height: 34px; padding-top: 1px; }
.field { width: 159px; height: 20px; background: #5d6c7d; line-height: 22px; padding-left: 5px; letter-spacing: .5px; }
.pick { width: 150px; height: 21px; display: flex; justify-content: space-between; padding-left: 9px; }
```
